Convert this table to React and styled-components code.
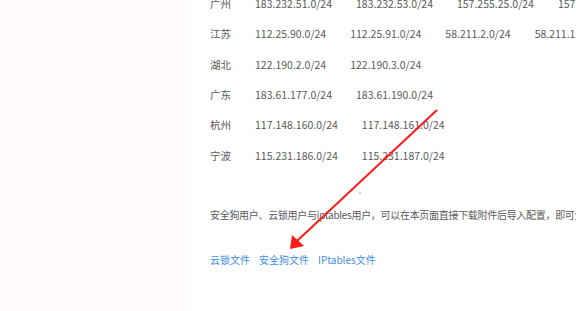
import React from "react";
import styled, { createGlobalStyle } from "styled-components";

const Global = createGlobalStyle`
  html, body { margin: 0; padding: 0; background: #fff; }
  body { font-family: "Noto Sans CJK SC", "Liberation Sans", sans-serif; }
`;

const Page = styled.div`
  position: relative;
  display: flex;
  width: 576px;
  height: 311px;
  overflow: hidden;
`;

const Sidebar = styled.aside`
  width: 188px;
  flex: none;
  background: #fffbff;
`;

const Main = styled.main`
  flex: 1;
  min-width: 0;
  padding-left: 22px;
  overflow: hidden;
  white-space: nowrap;
  font-size: 10.5px;
  color: #5a5a5a;
`;

const IpTable = styled.div`
  margin-top: -11px;
  display: flex;
  flex-direction: column;
`;

const Row = styled.div`
  display: flex;
  align-items: center;
  gap: 24px;
  height: 30.3px;
  line-height: 16px;
`;

const Region = styled.span`
  flex: none;
`;

const Cidr = styled.span`
  flex: none;
`;

const Note = styled.p`
  margin: 36px 0 0;
  font-size: 10px;
  letter-spacing: -0.3px;
  line-height: 16px;
`;

const Downloads = styled.div`
  display: flex;
  gap: 9px;
  margin-top: 29px;
  font-size: 10px;
  line-height: 16px;
`;

const FileLink = styled.a`
  color: #3d8ee6;
  text-decoration: none;
  cursor: pointer;
`;

const Annotation = styled.svg`
  position: absolute;
  left: 0;
  top: 0;
  pointer-events: none;
`;

const rows = [
  ["广州", ["183.232.51.0/24", "183.232.53.0/24", "157.255.25.0/24", "157.255.26.0/24"]],
  ["江苏", ["112.25.90.0/24", "112.25.91.0/24", "58.211.2.0/24", "58.211.137.0/24"]],
  ["湖北", ["122.190.2.0/24", "122.190.3.0/24"]],
  ["广东", ["183.61.177.0/24", "183.61.190.0/24"]],
  ["杭州", ["117.148.160.0/24", "117.148.161.0/24"]],
  ["宁波", ["115.231.186.0/24", "115.231.187.0/24"]],
];

const files = ["云锁文件", "安全狗文件", "IPtables文件"];

export default function App() {
  return (
    <>
      <Global />
      <Page>
        <Sidebar />
        <Main>
          <IpTable>
            {rows.map(([region, cidrs]) => (
              <Row key={region}>
                <Region>{region}</Region>
                {cidrs.map((c) => (
                  <Cidr key={c}>{c}</Cidr>
                ))}
              </Row>
            ))}
          </IpTable>
          <Note>
            安全狗用户、云锁用户与iptables用户，可以在本页面直接下载附件后导入配置，即可生效。
          </Note>
          <Downloads>
            {files.map((f) => (
              <FileLink key={f}>{f}</FileLink>
            ))}
          </Downloads>
        </Main>
        <Annotation width="576" height="311" viewBox="0 0 576 311">
          <line x1="437" y1="110" x2="297" y2="241" stroke="#ff1a1a" strokeWidth="2" />
          <polygon points="290,249 292,235 304,246" fill="#ff1a1a" />
          <circle cx="360" cy="193" r="0.9" fill="#f7a0a0" />
        </Annotation>
      </Page>
    </>
  );
}
